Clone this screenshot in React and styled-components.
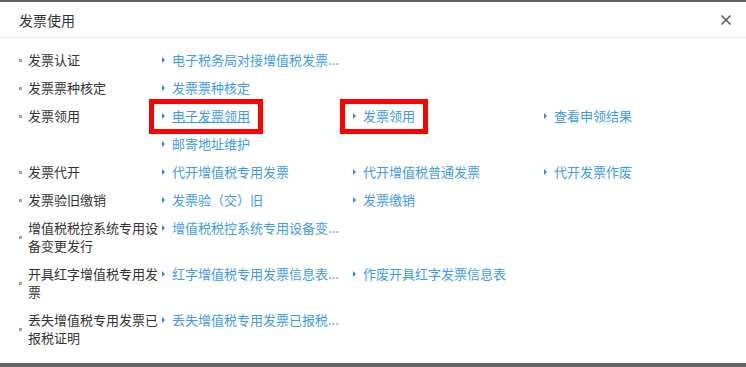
import React from 'react';
import styled, { createGlobalStyle } from 'styled-components';

const GlobalStyle = createGlobalStyle`
  html, body {
    margin: 0;
    padding: 0;
    background: #636363;
    font-family: "Noto Sans CJK SC", "Microsoft YaHei", sans-serif;
    text-spacing-trim: space-all;
  }
`;

const Dialog = styled.div`
  margin-top: 2px;
  height: 361px;
  background: #fff;
  overflow: hidden;
`;

const Header = styled.div`
  height: 35px;
  border-bottom: 1px solid #e9e9e9;
  padding: 0 15px 0 19px;
  display: flex;
  align-items: center;
  justify-content: space-between;
`;

const Title = styled.div`
  font-size: 14px;
  color: #333;
`;

const Close = styled.div`
  width: 10px;
  height: 10px;
  display: flex;
  cursor: pointer;
`;

const Body = styled.div`
  padding: 8px 0 0 19px;
`;

const Row = styled.div`
  display: flex;
  align-items: flex-start;
`;

const Label = styled.div`
  display: flex;
  align-items: center;
  padding: 5px 0;
  margin-right: 2px;
`;

const Bullet = styled.span`
  width: 3px;
  height: 3px;
  background: #a0a0a0;
  margin-right: 6px;
  flex: none;
`;

const LabelText = styled.span`
  width: 130px;
  font-size: 13px;
  line-height: 18px;
  color: #333;
`;

const Links = styled.div`
  display: grid;
  grid-template-columns: repeat(3, 191px);
`;

const Item = styled.div`
  padding: 5px 0 5px 2px;
  display: flex;
`;

const Anchor = styled.a`
  position: relative;
  display: inline-flex;
  align-items: center;
  font-size: 13px;
  line-height: 18px;
  color: #409be6;
  cursor: pointer;
  white-space: nowrap;

  span {
    text-decoration: ${p => (p.$underline ? 'underline' : 'none')};
  }

  &::after {
    content: '';
    display: ${p => (p.$mark ? 'block' : 'none')};
    position: absolute;
    left: -13px;
    right: -13px;
    top: -8px;
    bottom: -9px;
    border: 5px solid #f00;
  }
`;

const Arrow = styled.i`
  width: 0;
  height: 0;
  border-left: 3px solid #2b8ae0;
  border-top: 3px solid transparent;
  border-bottom: 3px solid transparent;
  margin-right: 7px;
`;

const rows = [
  { label: '发票认证', links: ['电子税务局对接增值税发票...'] },
  { label: '发票票种核定', links: ['发票票种核定'] },
  {
    label: '发票领用',
    links: [
      { text: '电子发票领用', mark: true, underline: true },
      { text: '发票领用', mark: true },
      '查看申领结果',
      '邮寄地址维护',
    ],
  },
  { label: '发票代开', links: ['代开增值税专用发票', '代开增值税普通发票', '代开发票作废'] },
  { label: '发票验旧缴销', links: ['发票验（交）旧', '发票缴销'] },
  { label: '增值税税控系统专用设备变更发行', links: ['增值税税控系统专用设备变...'] },
  { label: '开具红字增值税专用发票', links: ['红字增值税专用发票信息表...', '作废开具红字发票信息表'] },
  { label: '丢失增值税专用发票已报税证明', links: ['丢失增值税专用发票已报税...'] },
];

const App = () => {
  return (
    <>
      <GlobalStyle />
      <Dialog>
        <Header>
          <Title>发票使用</Title>
          <Close>
            <svg width="10" height="10" viewBox="0 0 10 10">
              <path d="M0.5 0.5L9.5 9.5M9.5 0.5L0.5 9.5" stroke="#555" strokeWidth="1.5" />
            </svg>
          </Close>
        </Header>
        <Body>
          {rows.map(row => (
            <Row key={row.label}>
              <Label>
                <Bullet />
                <LabelText>{row.label}</LabelText>
              </Label>
              <Links>
                {row.links.map(l => {
                  const link = typeof l === 'string' ? { text: l } : l;
                  return (
                    <Item key={link.text}>
                      <Anchor $mark={link.mark} $underline={link.underline}>
                        <Arrow />
                        <span>{link.text}</span>
                      </Anchor>
                    </Item>
                  );
                })}
              </Links>
            </Row>
          ))}
        </Body>
      </Dialog>
    </>
  );
};

export default App;
